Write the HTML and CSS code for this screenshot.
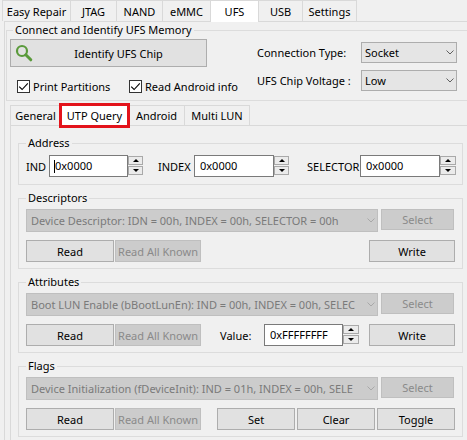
FILE: index.html
```html
<!DOCTYPE html>
<html>
<head>
<meta charset="utf-8">
<title>UFS</title>
<link rel="stylesheet" href="styles.css">
</head>
<body>
<div class="app">
  <div class="tabs top-tabs">
    <div class="tab">Easy Repair</div>
    <div class="tab">JTAG</div>
    <div class="tab">NAND</div>
    <div class="tab">eMMC</div>
    <div class="tab active">UFS</div>
    <div class="tab">USB</div>
    <div class="tab">Settings</div>
  </div>
  <div class="page">
    <fieldset class="group connect">
      <legend>Connect and Identify UFS Memory</legend>
      <div class="connect-body">
        <div class="connect-left">
          <button class="btn identify">
            <svg class="mag" width="18" height="18" viewBox="0 0 18 18"><circle cx="7" cy="7" r="5" fill="none" stroke="#5a9a3b" stroke-width="2.2"/><line x1="10.8" y1="10.8" x2="15.8" y2="15.8" stroke="#5a9a3b" stroke-width="3" stroke-linecap="round"/></svg>
            <span class="identify-text">Identify UFS Chip</span>
          </button>
          <div class="checks">
            <label class="check first"><span class="box"><svg width="11" height="11" viewBox="0 0 11 11"><path d="M1.2 5.6 L4.1 8.5 L9.8 2.3" fill="none" stroke="#000" stroke-width="1.1"/></svg></span>Print Partitions</label>
            <label class="check"><span class="box"><svg width="11" height="11" viewBox="0 0 11 11"><path d="M1.2 5.6 L4.1 8.5 L9.8 2.3" fill="none" stroke="#000" stroke-width="1.1"/></svg></span>Read Android info</label>
          </div>
        </div>
        <div class="connect-right">
          <span class="lbl">Connection Type:</span>
          <div class="combo"><span class="combo-text">Socket</span><svg class="chev" width="8" height="5" viewBox="0 0 8 5"><path d="M0.5 0.5 L4 4 L7.5 0.5" fill="none" stroke="#606060"/></svg></div>
          <span class="lbl">UFS Chip Voltage :</span>
          <div class="combo"><span class="combo-text">Low</span><svg class="chev" width="8" height="5" viewBox="0 0 8 5"><path d="M0.5 0.5 L4 4 L7.5 0.5" fill="none" stroke="#606060"/></svg></div>
        </div>
      </div>
    </fieldset>

    <div class="tabs sub-tabs">
      <div class="tab">General</div>
      <div class="tab active marked">UTP Query</div>
      <div class="tab">Android</div>
      <div class="tab">Multi LUN</div>
    </div>

    <div class="subpage">
      <fieldset class="group inner address">
        <legend>Address</legend>
        <div class="addr-row">
          <span class="alabel l-ind">IND</span>
          <div class="spin s1"><span class="spin-text"><span class="caret"></span>0x0000</span><span class="spin-btns"><span class="up"></span><span class="down"></span></span></div>
          <span class="alabel l-index">INDEX</span>
          <div class="spin s2"><span class="spin-text">0x0000</span><span class="spin-btns"><span class="up"></span><span class="down"></span></span></div>
          <span class="alabel l-sel">SELECTOR</span>
          <div class="spin s3"><span class="spin-text">0x0000</span><span class="spin-btns"><span class="up"></span><span class="down"></span></span></div>
        </div>
      </fieldset>

      <fieldset class="group inner">
        <legend>Descriptors</legend>
        <div class="row1">
          <div class="combo disabled wide"><span class="combo-text">Device Descriptor: IDN = 00h, INDEX = 00h, SELECTOR = 00h</span><svg class="chev" width="8" height="5" viewBox="0 0 8 5"><path d="M0.5 0.5 L4 4 L7.5 0.5" fill="none" stroke="#a8a8a8"/></svg></div>
          <button class="btn select" disabled>Select</button>
        </div>
        <div class="row2">
          <button class="btn read">Read</button>
          <button class="btn rak" disabled>Read All Known</button>
          <button class="btn write">Write</button>
        </div>
      </fieldset>

      <fieldset class="group inner">
        <legend>Attributes</legend>
        <div class="row1">
          <div class="combo disabled wide"><span class="combo-text">Boot LUN Enable (bBootLunEn): IND = 00h, INDEX = 00h, SELEC</span><svg class="chev" width="8" height="5" viewBox="0 0 8 5"><path d="M0.5 0.5 L4 4 L7.5 0.5" fill="none" stroke="#a8a8a8"/></svg></div>
          <button class="btn select" disabled>Select</button>
        </div>
        <div class="row2">
          <button class="btn read">Read</button>
          <button class="btn rak" disabled>Read All Known</button>
          <span class="value-lbl">Value:</span>
          <div class="spin s4"><span class="spin-text">0xFFFFFFFF</span><span class="spin-btns"><span class="up"></span><span class="down"></span></span></div>
          <button class="btn write">Write</button>
        </div>
      </fieldset>

      <fieldset class="group inner">
        <legend>Flags</legend>
        <div class="row1">
          <div class="combo disabled wide"><span class="combo-text">Device Initialization (fDeviceInit): IND = 01h, INDEX = 00h, SELE</span><svg class="chev" width="8" height="5" viewBox="0 0 8 5"><path d="M0.5 0.5 L4 4 L7.5 0.5" fill="none" stroke="#a8a8a8"/></svg></div>
          <button class="btn select" disabled>Select</button>
        </div>
        <div class="row2">
          <button class="btn read">Read</button>
          <button class="btn rak" disabled>Read All Known</button>
          <div class="flag-btns">
            <button class="btn small">Set</button>
            <button class="btn small">Clear</button>
            <button class="btn small">Toggle</button>
          </div>
        </div>
      </fieldset>
    </div>
  </div>
</div>
</body>
</html>
```

FILE: styles.css
```css
* { box-sizing: border-box; }
html, body { margin: 0; padding: 0; }
body {
  background: #f0f0f0;
  overflow: hidden;
  font-family: "Noto Sans", "Open Sans", sans-serif;
  font-size: 11px;
  color: #000;
}
.app { width: 472px; height: 440px; }

/* tabs */
.tabs { display: flex; align-items: flex-end; }
.tab {
  border: 1px solid #d9d9d9;
  border-bottom: none;
  margin-right: -1px;
  background: #f0f0f0;
  display: flex;
  align-items: center;
  justify-content: center;
  white-space: nowrap;
  flex: none;
}
.tab.active {
  background: #fff;
  position: relative;
  z-index: 1;
}
.top-tabs { height: 21px; padding-left: 2px; }
.top-tabs .tab { height: 21px; }
.top-tabs .tab.active { height: 22px; margin-bottom: -1px; }
.top-tabs .tab:nth-child(1) { width: 69px; }
.top-tabs .tab:nth-child(2) { width: 47px; }
.top-tabs .tab:nth-child(3) { width: 47px; }
.top-tabs .tab:nth-child(4) { width: 49px; }
.top-tabs .tab:nth-child(5) { width: 49px; }
.top-tabs .tab:nth-child(6) { width: 45px; }
.top-tabs .tab:nth-child(7) { width: 55px; }

.sub-tabs { height: 21px; margin-top: 3px; padding-left: 5px; }
.sub-tabs .tab { height: 20px; }
.sub-tabs .tab.active { height: 23px; margin-bottom: -1px; }
.sub-tabs .tab:nth-child(1) { width: 51px; }
.sub-tabs .tab:nth-child(2) { width: 69px; }
.sub-tabs .tab:nth-child(3) { width: 57px; }
.sub-tabs .tab:nth-child(4) { width: 66px; }
.tab.marked::after {
  content: "";
  position: absolute;
  left: -2px;
  right: -2px;
  top: -1px;
  bottom: -2px;
  border: 3px solid #e3131b;
}

/* pages */
.page {
  margin-left: 4px;
  border: 1px solid #d9d9d9;
  height: 430px;
}
.subpage {
  margin-left: 5px;
  border: 1px solid #d9d9d9;
  padding: 9px 0 0 7px;
  height: 330px;
}

/* group boxes */
.group {
  border: 1px solid #dcdcdc;
  margin: 0;
  min-width: 0;
}
.group legend {
  padding: 0 2px;
  line-height: 16px;
  height: 16px;
}
.connect {
  margin-left: 1px;
  padding: 1px 0 6px 3px;
}
.connect legend { margin-left: 3px; }

.inner {
  width: 445px;
  padding: 3px 7px 6px;
}
.inner + .inner { margin-top: 5px; }
.inner legend { margin-left: 0; }
.address { padding: 4px 7px 7px; }

/* connect body */
.connect-body {
  display: grid;
  grid-template-columns: 197px auto;
  column-gap: 50px;
}
.connect-left { min-width: 0; }
.btn {
  font: inherit;
  color: #000;
  background: #e1e1e1;
  border: 1px solid #adadad;
  padding: 0;
  margin: 0;
  height: 22px;
  white-space: nowrap;
  flex: none;
}
.btn:disabled {
  background: #cccccc;
  border-color: #bfbfbf;
  color: #8a8a8a;
}
.identify {
  width: 197px;
  height: 28px;
  display: flex;
  align-items: center;
  padding-left: 4px;
}
.mag { flex: none; }
.identify-text { flex: 1; text-align: center; padding-right: 2px; }

.checks {
  display: flex;
  align-items: center;
  height: 16px;
  margin-top: 11px;
  padding-left: 7px;
  width: 260px;
}
.check {
  display: flex;
  align-items: center;
  gap: 3px;
  white-space: nowrap;
  flex: none;
}
.check.first { width: 112px; }
.box {
  width: 13px;
  height: 13px;
  border: 1px solid #333;
  background: #fff;
  display: flex;
  align-items: center;
  justify-content: center;
  flex: none;
}

.connect-right {
  display: grid;
  grid-template-columns: 104px 96px;
  grid-auto-rows: 21px;
  row-gap: 7px;
  align-items: center;
  margin-top: 3px;
}
.lbl { white-space: nowrap; }

.combo {
  height: 21px;
  background: #e5e5e5;
  border: 1px solid #adadad;
  display: flex;
  align-items: center;
  padding-left: 3px;
}
.combo-text {
  flex: 1;
  overflow: hidden;
  white-space: nowrap;
}
.chev { flex: none; margin: 0 2px 0 4px; }
.combo.disabled {
  background: #cccccc;
  border-color: #bfbfbf;
  color: #7a7a7a;
  padding-left: 4px;
}
.combo.wide { width: 352px; height: 23px; flex: none; }

/* address row */
.addr-row {
  display: flex;
  align-items: center;
  height: 22px;
}
.alabel { white-space: nowrap; flex: none; }
.l-ind { width: 23px; }
.l-index { width: 36px; margin-left: 15px; }
.l-sel { width: 53px; margin-left: 18px; }

.spin { display: flex; height: 22px; flex: none; }
.spin-text {
  width: 79px;
  height: 22px;
  background: #fff;
  border: 1px solid #7a7a7a;
  padding-left: 5px;
  line-height: 20px;
  display: flex;
  align-items: center;
  white-space: nowrap;
}
.caret {
  width: 1px;
  height: 13px;
  background: #000;
  margin-left: -1px;
}
.spin-btns {
  width: 15px;
  display: flex;
  flex-direction: column;
  padding: 1px 0 0 0;
}
.spin-btns span {
  height: 9px;
  margin-bottom: 1px;
  border: 1px solid #a9a9a9;
  background: #ebebeb;
  display: flex;
  align-items: center;
  justify-content: center;
}
.spin-btns .up::before {
  content: "";
  border-left: 3px solid transparent;
  border-right: 3px solid transparent;
  border-bottom: 3px solid #000;
}
.spin-btns .down::before {
  content: "";
  border-left: 3px solid transparent;
  border-right: 3px solid transparent;
  border-top: 3px solid #000;
}
.s2 .spin-text, .s3 .spin-text { width: 80px; }
.s3 .spin-btns { width: 16px; }
.s4 .spin-btns { width: 16px; }

/* rows */
.row1 {
  display: flex;
  align-items: flex-start;
  gap: 3px;
}
.select { width: 73px; height: 21px; }
.row2 {
  display: flex;
  align-items: center;
  margin-top: 8px;
  height: 22px;
}
.read { width: 88px; }
.rak { width: 86px; margin-left: 1px; }
.write { width: 86px; margin-left: auto; }
.value-lbl { margin-left: 19px; width: 44px; flex: none; }
.flag-btns {
  margin-left: auto;
  display: flex;
  gap: 2px;
}
.small { width: 78px; }
```
